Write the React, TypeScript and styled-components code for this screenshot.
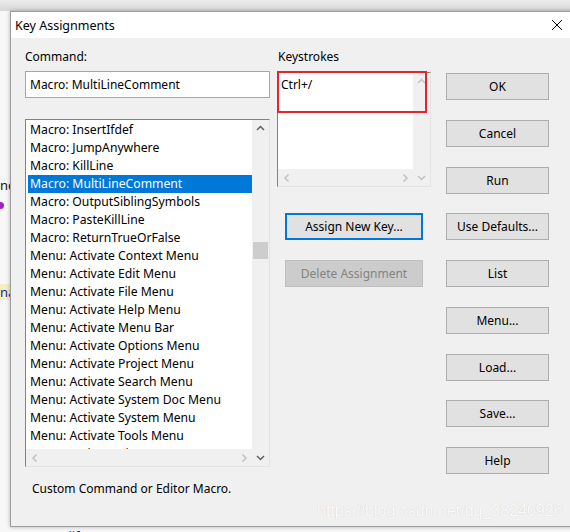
import React from 'react'
import styled, { createGlobalStyle } from 'styled-components'

const GlobalStyle = createGlobalStyle`
  html, body {
    margin: 0;
    padding: 0;
  }
  body {
    width: 570px;
    height: 532px;
    overflow: hidden;
    background: #f0f0f0;
    font-family: "Noto Sans", "Open Sans", sans-serif;
  }
`

// The editor behind the dialog, only its edges show
const Desktop = styled.div`
  position: relative;
  width: 570px;
  height: 532px;
  overflow: hidden;
  background: #f7f7f7;
`

const TopStrip = styled.div`
  height: 11px;
  background: linear-gradient(#ececec, #d6d6d6);
`

const EditorLine = styled.div<{ $top: number }>`
  margin-top: ${({ $top }) => $top}px;
  height: 16px;
  display: flex;
  gap: 15px;
  font-size: 13px;
  line-height: 16px;
  color: #111;
`

const Fragment = styled.span<{ $tone?: 'blue' | 'hl' }>`
  color: ${({ $tone }) => ($tone ? '#1a1aa8' : '#111')};
  background: ${({ $tone }) => ($tone === 'hl' ? '#f3efc4' : 'transparent')};
`

const Dot = styled.span`
  width: 4px;
  height: 7px;
  margin-top: 5px;
  border-radius: 0 4px 4px 0;
  background: #a020c0;
`

// The dialog window
const Window = styled.div`
  position: absolute;
  left: 10px;
  top: 11px;
  width: 571px;
  height: 516px;
  box-sizing: border-box;
  border: 1px solid #9c9c9c;
  background: #f0f0f0;
  box-shadow: 0 0 4px rgba(0, 0, 0, 0.28);
  display: flex;
  flex-direction: column;
  font-size: 12px;
  color: #000;
`

const TitleBar = styled.div`
  height: 26px;
  flex: none;
  background: #fff;
  display: flex;
  align-items: center;
  padding-left: 4px;
`

const Title = styled.span`
  flex: 1;
  font-size: 12.5px;
`

const CloseButton = styled.div`
  width: 46px;
  height: 26px;
  display: flex;
  align-items: center;
  justify-content: center;
`

const Body = styled.div`
  flex: 1;
  display: flex;
  padding: 11px 0 0 14px;
`

const Column = styled.div<{ $width: number; $gap?: number; $pad?: number }>`
  width: ${({ $width }) => $width}px;
  margin-left: ${({ $gap }) => $gap ?? 0}px;
  padding-top: ${({ $pad }) => $pad ?? 0}px;
  display: flex;
  flex-direction: column;
  flex: none;
`

const Label = styled.div<{ $indent?: number }>`
  height: 16px;
  line-height: 16px;
  padding-left: ${({ $indent }) => $indent ?? 0}px;
  white-space: nowrap;
`

const Input = styled.div`
  margin-top: 6px;
  height: 27px;
  box-sizing: border-box;
  border: 1px solid #a6a6a6;
  background: #fff;
  padding-left: 4px;
  line-height: 25px;
`

// Sunken box with scrollbars, used for the command list and the keystrokes
const ScrollBox = styled.div<{ $height: number; $top: number }>`
  margin-top: ${({ $top }) => $top}px;
  height: ${({ $height }) => $height}px;
  box-sizing: border-box;
  border: 1px solid #e3e3e3;
  border-top-color: #828282;
  border-left-color: #828282;
  background: #fff;
  display: grid;
  grid-template-columns: 1fr 17px;
  grid-template-rows: 1fr 17px;
  position: relative;
`

const ListArea = styled.div<{ $pad: string }>`
  overflow: hidden;
  padding: ${({ $pad }) => $pad};
  min-height: 0;
`

const Row = styled.div<{ $selected?: boolean }>`
  height: 18px;
  line-height: 18px;
  padding-left: 2px;
  white-space: nowrap;
  font-size: 12.2px;
  background: ${({ $selected }) => ($selected ? '#0078d7' : 'transparent')};
  color: ${({ $selected }) => ($selected ? '#fff' : '#000')};
`

const VScroll = styled.div`
  grid-column: 2;
  grid-row: 1 / span 2;
  background: #f0f0f0;
  display: flex;
  flex-direction: column;
`

const HScroll = styled.div`
  grid-column: 1;
  grid-row: 2;
  background: #f0f0f0;
  display: flex;
  justify-content: space-between;
`

const ArrowCell = styled.div`
  width: 17px;
  height: 17px;
  flex: none;
  display: flex;
  align-items: center;
  justify-content: center;
`

const Track = styled.div`
  flex: 1;
  display: flex;
  flex-direction: column;
  align-items: center;
`

const Thumb = styled.div<{ $offset: number }>`
  margin-top: ${({ $offset }) => $offset}px;
  width: 15px;
  height: 17px;
  background: #cdcdcd;
`

const RedMark = styled.div`
  position: absolute;
  left: -1px;
  top: -2px;
  width: 150px;
  height: 42px;
  box-sizing: border-box;
  border: 2px solid #e8232b;
  pointer-events: none;
`

const Button = styled.div<{ $width?: number; $top?: number; $indent?: number; $variant?: 'default' | 'disabled' }>`
  width: ${({ $width }) => $width ?? 103}px;
  height: 27px;
  margin-top: ${({ $top }) => $top ?? 0}px;
  margin-left: ${({ $indent }) => $indent ?? 0}px;
  box-sizing: border-box;
  flex: none;
  display: flex;
  align-items: center;
  justify-content: center;
  background: ${({ $variant }) => ($variant === 'disabled' ? '#cccccc' : '#e1e1e1')};
  border: ${({ $variant }) =>
    $variant === 'default' ? '2px solid #0078d7' : $variant === 'disabled' ? '1px solid #bfbfbf' : '1px solid #adadad'};
  color: ${({ $variant }) => ($variant === 'disabled' ? '#838383' : '#000')};
  white-space: nowrap;
`

const ButtonStack = styled.div`
  display: flex;
  flex-direction: column;
  gap: 19.75px;
`

const Status = styled.div`
  margin-top: 14px;
  padding-left: 7px;
  height: 16px;
  line-height: 16px;
  white-space: nowrap;
`

const Watermark = styled.div`
  position: absolute;
  left: 317px;
  top: 502px;
  font-family: "Liberation Sans", Arial, sans-serif;
  font-size: 16px;
  line-height: 18px;
  color: rgba(255, 255, 255, 0.92);
  text-shadow: 0 0 1px rgba(0, 0, 0, 0.18);
  white-space: nowrap;
  pointer-events: none;
`

const Arrow = ({ dir, light }: { dir: 'up' | 'down' | 'left' | 'right'; light?: boolean }) => {
  const d = {
    up: 'M1 5 L4.5 1.5 L8 5',
    down: 'M1 2 L4.5 5.5 L8 2',
    left: 'M5.5 0.5 L2 4 L5.5 7.5',
    right: 'M2.5 0.5 L6 4 L2.5 7.5',
  }[dir]
  const vertical = dir === 'up' || dir === 'down'
  return (
    <svg width={vertical ? 9 : 8} height={vertical ? 7 : 8} viewBox={vertical ? '0 0 9 7' : '0 0 8 8'}>
      <path d={d} fill="none" stroke={light ? '#c2c2c2' : '#606060'} strokeWidth="1.5" />
    </svg>
  )
}

const commands = [
  'Macro: InsertIfdef',
  'Macro: JumpAnywhere',
  'Macro: KillLine',
  'Macro: MultiLineComment',
  'Macro: OutputSiblingSymbols',
  'Macro: PasteKillLine',
  'Macro: ReturnTrueOrFalse',
  'Menu: Activate Context Menu',
  'Menu: Activate Edit Menu',
  'Menu: Activate File Menu',
  'Menu: Activate Help Menu',
  'Menu: Activate Menu Bar',
  'Menu: Activate Options Menu',
  'Menu: Activate Project Menu',
  'Menu: Activate Search Menu',
  'Menu: Activate System Doc Menu',
  'Menu: Activate System Menu',
  'Menu: Activate Tools Menu',
  'Menu: Activate View Menu',
]

const sideButtons = ['OK', 'Cancel', 'Run', 'Use Defaults...', 'List', 'Menu...', 'Load...', 'Save...', 'Help']

const App: React.FunctionComponent = () => {
  const selected = 'Macro: MultiLineComment'
  return (
    <>
      <GlobalStyle />
      <Desktop>
        <TopStrip />
        <EditorLine $top={166}>
          <Fragment>nd</Fragment>
        </EditorLine>
        <EditorLine $top={4}>
          <Dot />
        </EditorLine>
        <EditorLine $top={71}>
          <Fragment $tone="hl">na</Fragment>
        </EditorLine>
        <EditorLine $top={228}>
          <Fragment>n)</Fragment>
          <Fragment $tone="blue">// #Endif(0)</Fragment>
        </EditorLine>

        <Window>
          <TitleBar>
            <Title>Key Assignments</Title>
            <CloseButton>
              <svg width="10" height="10" viewBox="0 0 10 10">
                <path d="M0 0 L10 10 M10 0 L0 10" stroke="#000" strokeWidth="1" />
              </svg>
            </CloseButton>
          </TitleBar>
          <Body>
            <Column $width={245}>
              <Label>Command:</Label>
              <Input>{selected}</Input>
              <ScrollBox $height={348} $top={21}>
                <ListArea $pad="1px 0 0 2px">
                  {commands.map((c) => (
                    <Row key={c} $selected={c === selected}>
                      {c}
                    </Row>
                  ))}
                </ListArea>
                <VScroll>
                  <ArrowCell>
                    <Arrow dir="up" />
                  </ArrowCell>
                  <Track>
                    <Thumb $offset={105} />
                  </Track>
                  <ArrowCell>
                    <Arrow dir="down" />
                  </ArrowCell>
                </VScroll>
                <HScroll>
                  <ArrowCell>
                    <Arrow dir="left" light />
                  </ArrowCell>
                  <ArrowCell>
                    <Arrow dir="right" light />
                  </ArrowCell>
                </HScroll>
              </ScrollBox>
              <Status>Custom Command or Editor Macro.</Status>
            </Column>

            <Column $width={154} $gap={7}>
              <Label $indent={1}>Keystrokes</Label>
              <ScrollBox $height={115} $top={7}>
                <ListArea $pad="3px 0 0 3px">Ctrl+/</ListArea>
                <VScroll>
                  <ArrowCell>
                    <Arrow dir="up" light />
                  </ArrowCell>
                  <Track />
                  <ArrowCell>
                    <Arrow dir="down" light />
                  </ArrowCell>
                </VScroll>
                <HScroll>
                  <ArrowCell>
                    <Arrow dir="left" light />
                  </ArrowCell>
                  <ArrowCell>
                    <Arrow dir="right" light />
                  </ArrowCell>
                </HScroll>
                <RedMark />
              </ScrollBox>
              <Button $width={138} $top={26} $indent={8} $variant="default">
                Assign New Key...
              </Button>
              <Button $width={138} $top={20} $indent={8} $variant="disabled">
                Delete Assignment
              </Button>
            </Column>

            <Column $width={103} $gap={15} $pad={24}>
              <ButtonStack>
                {sideButtons.map((b) => (
                  <Button key={b}>{b}</Button>
                ))}
              </ButtonStack>
            </Column>
          </Body>
        </Window>

        <Watermark>https://blog.csdn.net/qq_38240926</Watermark>
      </Desktop>
    </>
  )
}

export default App
